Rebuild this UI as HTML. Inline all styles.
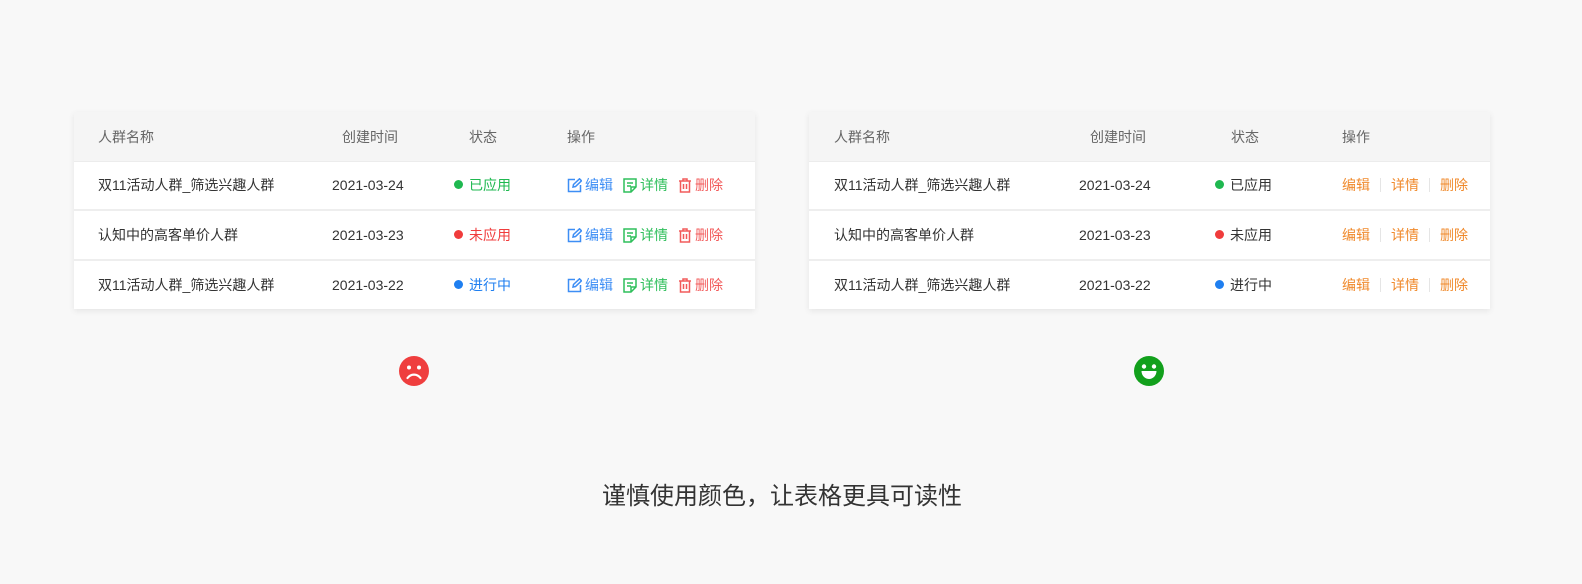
<!DOCTYPE html><html><head><meta charset="utf-8"><style>
body{margin:0;width:1582px;height:584px;background:#f8f8f8;font-family:"Liberation Sans","Noto Sans CJK SC",sans-serif;position:relative;overflow:hidden}
.t{position:absolute;top:112px;width:681px;height:197px;background:#fff;box-shadow:0 2px 6px rgba(0,0,0,.08)}
.h{position:absolute;left:0;right:0;top:0;height:49px;background:#f5f5f5;border-bottom:1px solid #ececec}
.r{position:absolute;left:0;right:0;height:48px;border-bottom:2px solid #eeeeee}
.c{position:absolute;font-size:14px;line-height:20px;color:#333;white-space:nowrap}
.h .c{color:#666;top:15px}
.r .c{top:14px}
.d{display:inline-block;width:9px;height:9px;border-radius:50%;margin-right:6px;vertical-align:1px}
.a{display:inline-flex;align-items:center;margin-right:10px}
.a svg{margin-right:3px}
.o{color:#f08a2c}.sep{display:inline-block;width:1px;height:14px;background:#e5e5e5;margin:0 10px;vertical-align:-2px}
</style></head><body>

<div class="t" style="left:74px">
<div class="h"><span class="c" style="left:24px">人群名称</span><span class="c" style="left:268px">创建时间</span><span class="c" style="left:395px">状态</span><span class="c" style="left:493px">操作</span></div>
<div class="r" style="top:49px"><span class="c" style="left:24px">双11活动人群_筛选兴趣人群</span><span class="c" style="left:258px">2021-03-24</span><span class="c" style="left:380px;color:#1fb850"><i class="d" style="background:#1fb850"></i>已应用</span><span class="c" style="left:493px"><span class="a" style="color:#3d8ef5"><svg width="15" height="15" viewBox="0 0 15 15" fill="none" stroke="#3d8ef5" stroke-width="1.5"><path d="M8 1.5H1.5v12h12V7"/><path d="M6 9l.5-2.5L12.5.8l2 2L8.5 8.5z"/></svg>编辑</span><span class="a" style="color:#2fbf5b"><svg width="14" height="15" viewBox="0 0 14 15" fill="none" stroke="#2fbf5b" stroke-width="1.5"><path d="M1 1h12v8l-5 5H1z"/><path d="M4 5h6M4 8h4M8 14V9h5"/></svg>详情</span><span class="a" style="color:#f25b5b"><svg width="14" height="15" viewBox="0 0 14 15" fill="none" stroke="#f25b5b" stroke-width="1.5"><path d="M1 3h12M5 3V1h4v2M2.5 3v11h9V3M5.5 6v5M8.5 6v5"/></svg>删除</span></span></div>
<div class="r" style="top:99px"><span class="c" style="left:24px">认知中的高客单价人群</span><span class="c" style="left:258px">2021-03-23</span><span class="c" style="left:380px;color:#f03c3c"><i class="d" style="background:#f03c3c"></i>未应用</span><span class="c" style="left:493px"><span class="a" style="color:#3d8ef5"><svg width="15" height="15" viewBox="0 0 15 15" fill="none" stroke="#3d8ef5" stroke-width="1.5"><path d="M8 1.5H1.5v12h12V7"/><path d="M6 9l.5-2.5L12.5.8l2 2L8.5 8.5z"/></svg>编辑</span><span class="a" style="color:#2fbf5b"><svg width="14" height="15" viewBox="0 0 14 15" fill="none" stroke="#2fbf5b" stroke-width="1.5"><path d="M1 1h12v8l-5 5H1z"/><path d="M4 5h6M4 8h4M8 14V9h5"/></svg>详情</span><span class="a" style="color:#f25b5b"><svg width="14" height="15" viewBox="0 0 14 15" fill="none" stroke="#f25b5b" stroke-width="1.5"><path d="M1 3h12M5 3V1h4v2M2.5 3v11h9V3M5.5 6v5M8.5 6v5"/></svg>删除</span></span></div>
<div class="r" style="top:149px;border:none"><span class="c" style="left:24px">双11活动人群_筛选兴趣人群</span><span class="c" style="left:258px">2021-03-22</span><span class="c" style="left:380px;color:#1f7ff0"><i class="d" style="background:#1f7ff0"></i>进行中</span><span class="c" style="left:493px"><span class="a" style="color:#3d8ef5"><svg width="15" height="15" viewBox="0 0 15 15" fill="none" stroke="#3d8ef5" stroke-width="1.5"><path d="M8 1.5H1.5v12h12V7"/><path d="M6 9l.5-2.5L12.5.8l2 2L8.5 8.5z"/></svg>编辑</span><span class="a" style="color:#2fbf5b"><svg width="14" height="15" viewBox="0 0 14 15" fill="none" stroke="#2fbf5b" stroke-width="1.5"><path d="M1 1h12v8l-5 5H1z"/><path d="M4 5h6M4 8h4M8 14V9h5"/></svg>详情</span><span class="a" style="color:#f25b5b"><svg width="14" height="15" viewBox="0 0 14 15" fill="none" stroke="#f25b5b" stroke-width="1.5"><path d="M1 3h12M5 3V1h4v2M2.5 3v11h9V3M5.5 6v5M8.5 6v5"/></svg>删除</span></span></div>
</div>

<div class="t" style="left:809px">
<div class="h"><span class="c" style="left:25px">人群名称</span><span class="c" style="left:281px">创建时间</span><span class="c" style="left:422px">状态</span><span class="c" style="left:533px">操作</span></div>
<div class="r" style="top:49px"><span class="c" style="left:25px">双11活动人群_筛选兴趣人群</span><span class="c" style="left:270px">2021-03-24</span><span class="c" style="left:406px"><i class="d" style="background:#1fb850"></i>已应用</span><span class="c o" style="left:533px">编辑<i class="sep"></i>详情<i class="sep"></i>删除</span></div>
<div class="r" style="top:99px"><span class="c" style="left:25px">认知中的高客单价人群</span><span class="c" style="left:270px">2021-03-23</span><span class="c" style="left:406px"><i class="d" style="background:#f03c3c"></i>未应用</span><span class="c o" style="left:533px">编辑<i class="sep"></i>详情<i class="sep"></i>删除</span></div>
<div class="r" style="top:149px;border:none"><span class="c" style="left:25px">双11活动人群_筛选兴趣人群</span><span class="c" style="left:270px">2021-03-22</span><span class="c" style="left:406px"><i class="d" style="background:#1f7ff0"></i>进行中</span><span class="c o" style="left:533px">编辑<i class="sep"></i>详情<i class="sep"></i>删除</span></div>
</div>

<svg style="position:absolute;left:399px;top:356px" width="30" height="30" viewBox="0 0 30 30"><circle cx="15" cy="15" r="15" fill="#ef3e3e"/><circle cx="10" cy="11.5" r="2" fill="#fff"/><circle cx="20" cy="11.5" r="2" fill="#fff"/><path d="M8.5 22c3.5-4.5 9.5-4.5 13 0" stroke="#fff" stroke-width="2.2" fill="none" stroke-linecap="round"/></svg>
<svg style="position:absolute;left:1134px;top:356px" width="30" height="30" viewBox="0 0 30 30"><circle cx="15" cy="15" r="15" fill="#12a01c"/><circle cx="10" cy="10.5" r="2.2" fill="#fff"/><circle cx="20" cy="10.5" r="2.2" fill="#fff"/><path d="M7.5 15h15c0 4.5-3.5 8-7.5 8s-7.5-3.5-7.5-8z" fill="#fff"/></svg>

<div style="position:absolute;left:0;width:1564px;top:481px;text-align:center;font-size:24px;line-height:32px;color:#333">谨慎使用颜色，让表格更具可读性</div>
</body></html>
